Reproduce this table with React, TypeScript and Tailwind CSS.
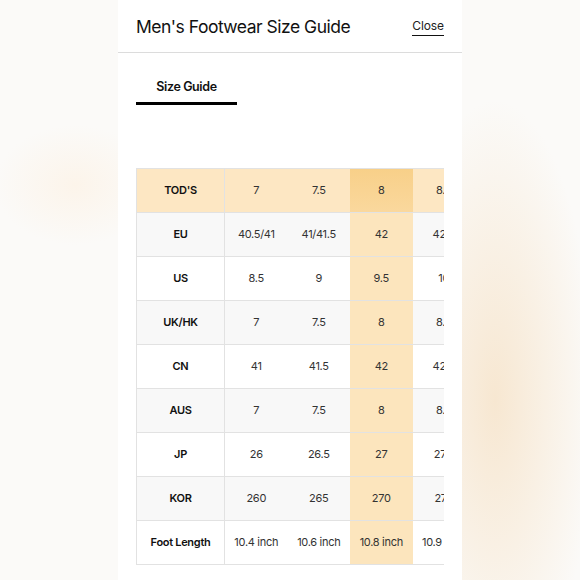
import React from 'react';

type Row = { label: string; values: string[] };

const rows: Row[] = [
  { label: "TOD'S", values: ['7', '7.5', '8', '8.5', '9'] },
  { label: 'EU', values: ['40.5/41', '41/41.5', '42', '42.5', '43'] },
  { label: 'US', values: ['8.5', '9', '9.5', '10', '10.5'] },
  { label: 'UK/HK', values: ['7', '7.5', '8', '8.5', '9'] },
  { label: 'CN', values: ['41', '41.5', '42', '42.5', '43'] },
  { label: 'AUS', values: ['7', '7.5', '8', '8.5', '9'] },
  { label: 'JP', values: ['26', '26.5', '27', '27.5', '28'] },
  { label: 'KOR', values: ['260', '265', '270', '275', '280'] },
  { label: 'Foot Length', values: ['10.4 inch', '10.6 inch', '10.8 inch', '10.9 inch', '11.1 inch'] },
];

// column matching the selected size
const HIGHLIGHT = 2;

function SizeTable() {
  return (
    <div className="w-[308px] overflow-hidden">
      <div className="w-max border-l border-t border-[#e2e2e2]">
        {rows.map((row, r) => {
          const isHead = r === 0;
          const rowBg = isHead ? 'bg-[#fde7c3]' : r % 2 === 1 ? 'bg-[#f8f8f8]' : 'bg-white';
          return (
            <div key={row.label} className={`flex h-[44px] border-b border-[#e2e2e2] ${rowBg}`}>
              <div className="flex w-[88px] shrink-0 items-center justify-center border-r border-[#e2e2e2] text-[11px] font-semibold tracking-[-0.3px] text-[#111]">
                {row.label}
              </div>
              {row.values.map((v, c) => {
                const hi = c === HIGHLIGHT;
                const cellBg = hi
                  ? isHead
                    ? 'bg-[linear-gradient(180deg,#f8d089,#fad89d)]'
                    : 'bg-[#fce5bd]'
                  : '';
                return (
                  <div
                    key={c}
                    className={`flex w-[62.5px] shrink-0 items-center justify-center whitespace-nowrap text-[11px] tracking-[-0.3px] text-[#333] ${cellBg}`}
                  >
                    {v}
                  </div>
                );
              })}
            </div>
          );
        })}
      </div>
    </div>
  );
}

export default function App() {
  return (
    <div className="h-[580px] w-[580px] overflow-hidden bg-[#fbfaf8] bg-[radial-gradient(ellipse_100px_300px_at_495px_400px,#f7e7d1_0%,transparent_100%),radial-gradient(ellipse_80px_60px_at_75px_185px,#fcf4ea_0%,transparent_100%)] font-['Inter',sans-serif]">
      <div className="mx-auto h-full w-[344px] bg-white">
        <header className="flex h-[53px] items-center justify-between border-b border-[#dcdcdc] px-[18px]">
          <h1 className="mt-[2px] text-[17.5px] font-normal tracking-[-0.5px] text-[#111]">Men's Footwear Size Guide</h1>
          <button className="mt-[2px] border-b border-[#111] pb-[2px] text-[12px] leading-[15px] tracking-[-0.1px] text-[#222]">
            Close
          </button>
        </header>

        <div className="px-[18px]">
          <div className="w-[101px] border-b-[3px] border-black pb-[7px] pt-[26px] text-center text-[12.5px] font-semibold leading-[16px] tracking-[-0.4px] text-[#111]">
            Size Guide
          </div>

          <div className="mt-[63px]">
            <SizeTable />
          </div>
        </div>
      </div>
    </div>
  );
}
